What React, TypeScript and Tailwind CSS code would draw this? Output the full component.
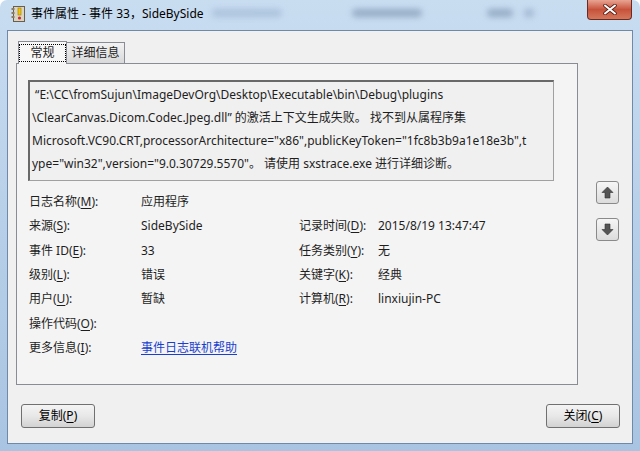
import React from "react";

const font = { fontFamily: '"Noto Sans", "Noto Sans CJK SC", sans-serif' };

function M({ children }: { children: React.ReactNode }) {
  return <span className="underline underline-offset-2">{children}</span>;
}

function ArrowBtn({ up }: { up?: boolean }) {
  return (
    <div className="w-[23px] h-[23px] rounded-[3px] border border-[#8a8a8a] bg-gradient-to-b from-[#f6f6f6] to-[#dcdcdc] flex items-center justify-center">
      <svg width="13" height="13" viewBox="0 0 13 13">
        {up ? (
          <polygon points="6.5,1 12,6.5 9,6.5 9,12 4,12 4,6.5 1,6.5" fill="#555" stroke="#333" strokeWidth="0.6" />
        ) : (
          <polygon points="6.5,12 12,6.5 9,6.5 9,1 4,1 4,6.5 1,6.5" fill="#555" stroke="#333" strokeWidth="0.6" />
        )}
      </svg>
    </div>
  );
}

function Btn({ children }: { children: React.ReactNode }) {
  return (
    <div className="w-[74px] h-[24px] rounded-[3px] border border-[#707070] bg-gradient-to-b from-[#f4f4f4] via-[#e8e8e8] to-[#d2d2d2] flex items-center justify-center text-[12px] text-black">
      {children}
    </div>
  );
}

export default function App() {
  const rows: [React.ReactNode, React.ReactNode, React.ReactNode, React.ReactNode][] = [
    [<>日志名称(<M>M</M>):</>, "应用程序", "", ""],
    [<>来源(<M>S</M>):</>, "SideBySide", <>记录时间(<M>D</M>):</>, "2015/8/19 13:47:47"],
    [<>事件 ID(<M>E</M>):</>, "33", <>任务类别(<M>Y</M>):</>, "无"],
    [<>级别(<M>L</M>):</>, "错误", <>关键字(<M>K</M>):</>, "经典"],
    [<>用户(<M>U</M>):</>, "暂缺", <>计算机(<M>R</M>):</>, "linxiujin-PC"],
    [<>操作代码(<M>O</M>):</>, "", "", ""],
    [
      <>更多信息(<M>I</M>):</>,
      <span className="text-[#1a3fd0] underline underline-offset-2">事件日志联机帮助</span>,
      "",
      "",
    ],
  ];

  return (
    <div
      className="w-[640px] h-[451px] overflow-hidden rounded-t-[7px] bg-gradient-to-b from-[#c9ddf1] via-[#b7cfe8] to-[#a9c4e2] flex flex-col text-[12px] text-[#1e1e1e]"
      style={font}
    >
      {/* title bar */}
      <div className="h-[30px] flex items-start relative shrink-0">
        <div className="pl-[11px] pt-[6px] flex items-center gap-[5px]">
          <svg width="15" height="16" viewBox="0 0 15 16">
            <rect x="2.5" y="0.5" width="11" height="15" fill="#d9d4c4" stroke="#6b5d48" />
            <rect x="0.5" y="2" width="3" height="2" fill="#8a7a60" />
            <rect x="0.5" y="6" width="3" height="2" fill="#8a7a60" />
            <rect x="0.5" y="10" width="3" height="2" fill="#8a7a60" />
            <rect x="7" y="2" width="3" height="7" fill="#f3c400" stroke="#a07c00" strokeWidth="0.6" />
            <circle cx="8.5" cy="12" r="1.6" fill="#d12a2a" />
          </svg>
          <span className="text-[12px] text-black leading-none whitespace-nowrap">事件属性 - 事件 33，SideBySide</span>
        </div>
        <div className="absolute left-[212px] top-[9px] w-[70px] h-[8px] bg-[#9fb8d4] rounded blur-[3px] opacity-70" />
        <div className="absolute left-[352px] top-[9px] w-[70px] h-[8px] bg-[#7f97b3] rounded blur-[3px] opacity-70" />
        <div className="absolute left-[487px] top-[9px] w-[26px] h-[8px] bg-[#7f97b3] rounded blur-[3px] opacity-70" />
        <div className="absolute left-[524px] top-[9px] w-[10px] h-[8px] bg-[#8ea6c2] rounded blur-[3px] opacity-70" />
        <div className="absolute right-[8px] top-0 w-[45px] h-[20px] rounded-b-[4px] border border-t-0 border-[#6d2a22] bg-gradient-to-b from-[#e8a493] via-[#c7523c] to-[#d3785b] flex items-center justify-center">
          <svg width="14" height="11" viewBox="0 0 14 11">
            <path d="M2 1.5 L12 9.5 M12 1.5 L2 9.5" stroke="#5a2018" strokeWidth="3.6" strokeLinecap="round" />
            <path d="M2 1.5 L12 9.5 M12 1.5 L2 9.5" stroke="#ffffff" strokeWidth="2" strokeLinecap="round" />
          </svg>
        </div>
      </div>

      {/* client */}
      <div className="mx-[7px] h-[414px] border border-[#6e8aa8] bg-[#f0f0f0] flex flex-col shrink-0">
        <div className="flex pt-[9px]">
          {/* tabs + panel */}
          <div className="ml-[8px] w-[562px] flex flex-col">
            <div className="flex items-end h-[23px] pl-[2px] relative z-10">
              <div className="w-[49px] h-[23px] border border-b-0 border-[#898c95] bg-[#f7f7f7] flex items-center justify-center -mb-px">
                <div className="border border-dotted border-black px-[10px] h-[18px] flex items-center leading-none">常规</div>
              </div>
              <div className="w-[58px] h-[21px] border border-l-0 border-b-0 border-[#898c95] bg-gradient-to-b from-[#f2f2f2] to-[#d9d9d9] flex items-center justify-center leading-none">
                详细信息
              </div>
            </div>
            <div className="h-[322px] border border-[#898c95] bg-[#f4f4f4] flex flex-col">
              <div className="ml-[11px] mt-[16px] w-[526px] h-[101px] border border-[#a0a0a0] border-t-[#696969] border-l-[#696969] border-t-2 border-l-2 bg-[#f0f0f0] pl-[2px] pt-[1px] flex flex-col">
                <div className="h-[23px] leading-[23px] whitespace-nowrap">&nbsp;“E:\CC\fromSujun\ImageDevOrg\Desktop\Executable\bin\Debug\plugins</div>
                <div className="h-[23px] leading-[23px] whitespace-nowrap">\ClearCanvas.Dicom.Codec.Jpeg.dll” 的激活上下文生成失败。 找不到从属程序集</div>
                <div className="h-[23px] leading-[23px] whitespace-nowrap">Microsoft.VC90.CRT,processorArchitecture="x86",publicKeyToken="1fc8b3b9a1e18e3b",t</div>
                <div className="h-[23px] leading-[23px] whitespace-nowrap">ype="win32",version="9.0.30729.5570"。 请使用 sxstrace.exe 进行详细诊断。</div>
              </div>
              <div className="ml-[12px] mt-[9px] grid grid-cols-[112px_158px_79px_auto] auto-rows-[24.3px] items-center">
                {rows.map((r, i) => (
                  <React.Fragment key={i}>
                    <div className="whitespace-nowrap">{r[0]}</div>
                    <div className="whitespace-nowrap">{r[1]}</div>
                    <div className="whitespace-nowrap">{r[2]}</div>
                    <div className="whitespace-nowrap">{r[3]}</div>
                  </React.Fragment>
                ))}
              </div>
            </div>
          </div>
          {/* arrows */}
          <div className="ml-[18px] mt-[141px] flex flex-col gap-[14px]">
            <ArrowBtn up />
            <ArrowBtn />
          </div>
        </div>
        <div className="mt-[19px] flex justify-between pl-[13px] pr-[12px]">
          <Btn>
            复制(<M>P</M>)
          </Btn>
          <Btn>
            关闭(<M>C</M>)
          </Btn>
        </div>
      </div>
    </div>
  );
}
